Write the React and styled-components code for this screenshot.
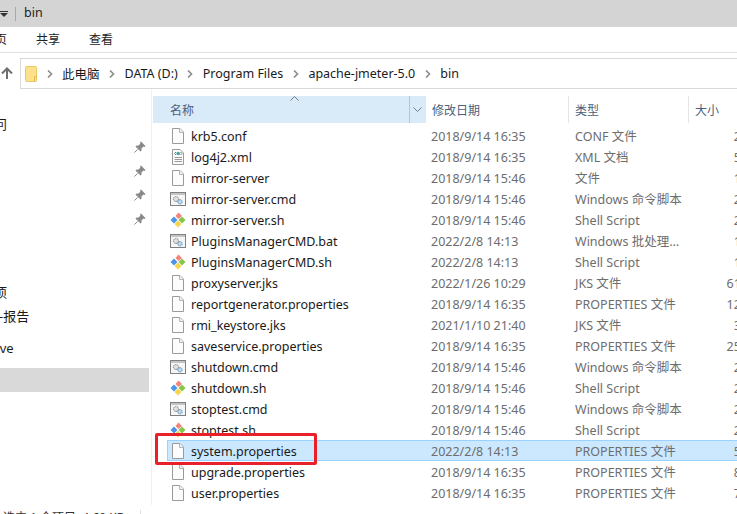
import React from 'react'
import styled, { createGlobalStyle } from 'styled-components'

const Global = createGlobalStyle`
  html, body { margin: 0; padding: 0; background: #fff; }
  body { font-family: "Noto Sans", "Noto Sans CJK SC", sans-serif; font-size: 13px; }
`

const files = [
  { name: 'krb5.conf', date: '2018/9/14 16:35', type: 'CONF 文件', size: '2 KB', icon: 'file' },
  { name: 'log4j2.xml', date: '2018/9/14 16:35', type: 'XML 文档', size: '5 KB', icon: 'xml' },
  { name: 'mirror-server', date: '2018/9/14 15:46', type: '文件', size: '1 KB', icon: 'file' },
  { name: 'mirror-server.cmd', date: '2018/9/14 15:46', type: 'Windows 命令脚本', size: '2 KB', icon: 'cmd' },
  { name: 'mirror-server.sh', date: '2018/9/14 15:46', type: 'Shell Script', size: '2 KB', icon: 'git' },
  { name: 'PluginsManagerCMD.bat', date: '2022/2/8 14:13', type: 'Windows 批处理...', size: '1 KB', icon: 'cmd' },
  { name: 'PluginsManagerCMD.sh', date: '2022/2/8 14:13', type: 'Shell Script', size: '1 KB', icon: 'git' },
  { name: 'proxyserver.jks', date: '2022/1/26 10:29', type: 'JKS 文件', size: '61 KB', icon: 'file' },
  { name: 'reportgenerator.properties', date: '2018/9/14 16:35', type: 'PROPERTIES 文件', size: '12 KB', icon: 'file' },
  { name: 'rmi_keystore.jks', date: '2021/1/10 21:40', type: 'JKS 文件', size: '3 KB', icon: 'file' },
  { name: 'saveservice.properties', date: '2018/9/14 16:35', type: 'PROPERTIES 文件', size: '25 KB', icon: 'file' },
  { name: 'shutdown.cmd', date: '2018/9/14 15:46', type: 'Windows 命令脚本', size: '2 KB', icon: 'cmd' },
  { name: 'shutdown.sh', date: '2018/9/14 15:46', type: 'Shell Script', size: '2 KB', icon: 'git' },
  { name: 'stoptest.cmd', date: '2018/9/14 15:46', type: 'Windows 命令脚本', size: '2 KB', icon: 'cmd' },
  { name: 'stoptest.sh', date: '2018/9/14 15:46', type: 'Shell Script', size: '2 KB', icon: 'git' },
  { name: 'system.properties', date: '2022/2/8 14:13', type: 'PROPERTIES 文件', size: '5 KB', icon: 'file', selected: true },
  { name: 'upgrade.properties', date: '2018/9/14 16:35', type: 'PROPERTIES 文件', size: '8 KB', icon: 'file' },
  { name: 'user.properties', date: '2018/9/14 16:35', type: 'PROPERTIES 文件', size: '7 KB', icon: 'file' },
]

const crumbs = ['此电脑', 'DATA (D:)', 'Program Files', 'apache-jmeter-5.0', 'bin']

const FileIcon = () => (
  <svg width="14" height="16" viewBox="0 0 14 16">
    <path d="M1.500 .5H9L12.500 4V15.500H1.500Z" fill="#fcfcfc" stroke="#9a9a9a" />
    <path d="M8.500 .5V4.500H12.500" fill="#f0f0f0" stroke="#b5b5b5" />
  </svg>
)

const XmlIcon = () => (
  <svg width="14" height="16" viewBox="0 0 14 16">
    <path d="M1.500 .5H9L12.500 4V15.500H1.500Z" fill="#fbfbfb" stroke="#9a9a9a" />
    <path d="M5 3 3.500 4.500 5 6M9.500 3 11 4.500 9.500 6" fill="none" stroke="#777" />
    <circle cx="7.200" cy="4.500" r="1.800" fill="#2f9fc9" />
    <circle cx="7.200" cy="3.800" r=".9" fill="#5cb85c" />
    <path d="M3.500 8.500H11M3.500 10.500H11M3.500 12.500H11" stroke="#9a9a9a" />
  </svg>
)

const CmdIcon = () => (
  <svg width="16" height="14" viewBox="0 0 16 14">
    <rect x=".5" y=".5" width="15" height="13" fill="#f6f6f6" stroke="#808080" />
    <rect x="1" y="1" width="14" height="2" fill="#c4c4c4" />
    <circle cx="6" cy="7" r="2.500" fill="#e2e2e2" stroke="#808080" strokeDasharray="1.500 .6" />
    <circle cx="10" cy="9.800" r="2.200" fill="#bcd9ef" stroke="#5f93bd" strokeDasharray="1.500 .6" />
  </svg>
)

const GitIcon = () => (
  <svg width="16" height="16" viewBox="0 0 16 16">
    <path d="M8.500 .5 12 4 8.500 7 5.500 4Z" fill="#f4837a" />
    <path d="M4 4.500 7.500 8 4 11.500 .5 8Z" fill="#4a94ea" />
    <path d="M12 4.500 15.500 8 12 11.500 8.500 8Z" fill="#84c64c" />
    <path d="M8 8.500 11.500 12 8 15.500 4.500 12Z" fill="#f7d64a" />
  </svg>
)

const icons = { file: FileIcon, xml: XmlIcon, cmd: CmdIcon, git: GitIcon }

const PinIcon = () => (
  <svg width="12" height="12" viewBox="0 0 12 12">
    <path d="M7 .5 11.500 5 10.500 6 9.500 5.500 7.500 7.500 7.500 9.500 6.500 10.500 1.500 5.500 2.500 4.500 4.500 4.500 6.500 2.500 6 1.500Z" fill="#8a8a8a" />
    <path d="M3.500 8.500 .5 11.500" stroke="#8a8a8a" />
  </svg>
)

const FolderIcon = () => (
  <svg width="12" height="16" viewBox="0 0 12 16">
    <rect x=".5" y=".5" width="11" height="15" rx="1" fill="#fde28b" stroke="#e8c766" />
    <path d="M9.500 15.500V10.500H11.500" fill="none" stroke="#e3b94d" />
  </svg>
)

const UpArrow = () => (
  <svg width="12" height="13" viewBox="0 0 12 13">
    <path d="M6 12V1.500M1 6.500 6 1.500 11 6.500" fill="none" stroke="#6f6f6f" strokeWidth="2" />
  </svg>
)

const Chevron = () => (
  <svg width="6" height="8" viewBox="0 0 6 8">
    <path d="M1 .5 4.500 4 1 7.500" fill="none" stroke="#8c8c8c" strokeWidth="1.600" />
  </svg>
)

const SmallCaret = () => (
  <svg width="9" height="5" viewBox="0 0 9 5">
    <path d="M.5 .5 4.500 4.500 8.500 .5" fill="none" stroke="#6e7f92" />
  </svg>
)

const SortCaret = () => (
  <svg width="9" height="5" viewBox="0 0 9 5">
    <path d="M.5 4.500 4.500 .5 8.500 4.500" fill="none" stroke="#7a7a7a" />
  </svg>
)

export default function App() {
  return (
    <Page>
      <Global />
      <TitleBar>
        <QuickCaret />
        <TitleSep />
        <TitleText>bin</TitleText>
      </TitleBar>
      <Ribbon>
        <Tab $clip>主页</Tab>
        <Tab>共享</Tab>
        <Tab>查看</Tab>
      </Ribbon>
      <NavRow>
        <UpButton><UpArrow /></UpButton>
        <AddressBar>
          <FolderIcon />
          {crumbs.map((c) => (
            <React.Fragment key={c}>
              <Chevron />
              <Crumb>{c}</Crumb>
            </React.Fragment>
          ))}
        </AddressBar>
      </NavRow>
      <Body>
        <Sidebar>
          <NavItem><NavLabel $shift={-45}>快速访问</NavLabel></NavItem>
          {[0, 1, 2, 3].map((i) => (
            <NavItem key={i}><PinSlot><PinIcon /></PinSlot></NavItem>
          ))}
          <NavItem />
          <NavItem />
          <NavItem><NavLabel $shift={-19}>事项</NavLabel></NavItem>
          <NavItem><NavLabel $shift={-27}>测试-报告</NavLabel></NavItem>
          <NavItem $gap={9}><NavLabel $shift={-44}>OneDrive</NavLabel></NavItem>
          <NavItem $active $gap={8} />
        </Sidebar>
        <List>
          <HeaderRow>
            <NameHead>
              名称
              <SortMark><SortCaret /></SortMark>
              <HeadDrop><SmallCaret /></HeadDrop>
            </NameHead>
            <HeadCell>修改日期</HeadCell>
            <HeadCell>类型</HeadCell>
            <HeadCell>大小</HeadCell>
          </HeaderRow>
          <Rows>
            {files.map((f) => {
              const Icon = icons[f.icon]
              return (
                <Row key={f.name} $selected={f.selected}>
                  <NameCell>
                    <IconSlot><Icon /></IconSlot>
                    {f.name}
                  </NameCell>
                  <DateCell>{f.date}</DateCell>
                  <TypeCell>{f.type}</TypeCell>
                  <SizeCell>{f.size}</SizeCell>
                </Row>
              )
            })}
          </Rows>
        </List>
      </Body>
      <Status>
        <StatusText>选中 1 个项目  4.60 KB</StatusText>
        <StatusTick />
      </Status>
      <Highlight />
    </Page>
  )
}

const Page = styled.div`
  position: relative;
  width: 737px;
  height: 514px;
  overflow: hidden;
  display: flex;
  flex-direction: column;
  background: #fff;
  color: #1a1a1a;
`
const TitleBar = styled.div`
  height: 27px;
  flex: none;
  background: #d4d4d4;
  display: flex;
  align-items: center;
`
const QuickCaret = styled.div`
  position: relative;
  width: 0;
  height: 0;
  margin: 2px 0 0 0;
  border-left: 4px solid transparent;
  border-right: 4px solid transparent;
  border-top: 4px solid #333;
  &::before {
    content: '';
    position: absolute;
    left: -4px;
    top: -6px;
    width: 8px;
    height: 1px;
    background: #333;
  }
`
const TitleSep = styled.div`
  width: 1px;
  height: 14px;
  margin-left: 7px;
  background: #a8a8a8;
`
const TitleText = styled.div`
  margin: 0 0 3px 8px;
  font-size: 12.500px;
  color: #222;
`
const Ribbon = styled.div`
  height: 26px;
  flex: none;
  border-bottom: 1px solid #e0e0e0;
  display: flex;
  align-items: center;
  gap: 29px;
  padding-bottom: 1px;
  box-sizing: border-box;
`
const Tab = styled.div`
  font-size: 12px;
  color: #222;
  margin-left: ${(p) => (p.$clip ? '-17px' : '0')};
`
const NavRow = styled.div`
  height: 31px;
  flex: none;
  margin-top: 5px;
  display: flex;
  align-items: center;
`
const UpButton = styled.div`
  width: 20px;
  flex: none;
  display: flex;
  justify-content: center;
  padding-right: 6px;
  box-sizing: border-box;
`
const AddressBar = styled.div`
  flex: 1;
  height: 31px;
  box-sizing: border-box;
  border: 1px solid #d9d9d9;
  border-right: 0;
  display: flex;
  align-items: center;
  padding-left: 4px;
  gap: 9.500px;
`
const Crumb = styled.span`
  font-size: 12.500px;
  color: #1a1a1a;
  white-space: nowrap;
`
const Body = styled.div`
  flex: 1;
  min-height: 0;
  display: flex;
`
const Sidebar = styled.div`
  width: 152px;
  flex: none;
  box-sizing: border-box;
  padding-top: 22px;
  border-right: 1px solid #f0f0f0;
  overflow: hidden;
`
const NavItem = styled.div`
  height: 24px;
  width: 149px;
  display: flex;
  align-items: center;
  white-space: nowrap;
  margin-top: ${(p) => p.$gap || 0}px;
  background: ${(p) => (p.$active ? '#d9d9d9' : 'transparent')};
`
const NavLabel = styled.span`
  font-size: 13px;
  color: #1a1a1a;
  margin-left: ${(p) => p.$shift}px;
`
const PinSlot = styled.span`
  margin-left: 134px;
  display: flex;
`
const List = styled.div`
  flex: 1;
  min-width: 0;
  padding: 7px 0 0 1px;
`
const HeaderRow = styled.div`
  height: 27px;
  display: grid;
  grid-template-columns: 272px 143px 120px 1fr;
`
const HeadCell = styled.div`
  display: flex;
  align-items: center;
  padding-left: 6px;
  font-size: 12px;
  color: #4c607a;
  & + & { border-left: 1px solid #e5e5e5; }
`
const NameHead = styled(HeadCell)`
  position: relative;
  padding-left: 17px;
  background: #d9ebf9;
`
const SortMark = styled.span`
  position: absolute;
  left: 137px;
  top: 0;
  display: flex;
`
const HeadDrop = styled.span`
  position: absolute;
  right: 0;
  top: 0;
  bottom: 0;
  width: 15px;
  border-left: 1px solid #a9c8e0;
  display: flex;
  align-items: center;
  justify-content: center;
`
const Rows = styled.div`
  padding: 2px 0 0 14px;
`
const Row = styled.div`
  width: 593px;
  height: 21px;
  display: grid;
  grid-template-columns: 258px 143px 120px 72px;
  align-items: center;
  box-sizing: border-box;
  line-height: 17px;
  padding-top: 1px;
  white-space: nowrap;
  background: ${(p) => (p.$selected ? '#cce8ff' : 'transparent')};
  box-shadow: ${(p) => (p.$selected ? 'inset 0 0 0 1px #99d1ff' : 'none')};
`
const NameCell = styled.div`
  display: flex;
  align-items: center;
  font-size: 12.500px;
  color: #1a1a1a;
`
const IconSlot = styled.span`
  width: 24px;
  flex: none;
  display: flex;
  justify-content: center;
  padding-right: 3px;
  box-sizing: border-box;
`
const DateCell = styled.div`
  padding-left: 6px;
  font-size: 12.500px;
  color: #6d6d6d;
`
const TypeCell = styled(DateCell)`
  padding-left: 7px;
`
const SizeCell = styled(DateCell)`
  padding: 0;
  text-align: right;
`
const Status = styled.div`
  height: 9px;
  flex: none;
  display: flex;
  position: relative;
`
const StatusText = styled.div`
  margin: 3px 0 0 3px;
  font-size: 12px;
  white-space: pre;
  color: #333;
`
const StatusTick = styled.div`
  position: absolute;
  left: 140px;
  top: 5px;
  width: 1px;
  height: 4px;
  background: #e0e0e0;
`
const Highlight = styled.div`
  position: absolute;
  left: 155px;
  top: 433px;
  width: 162px;
  height: 32px;
  box-sizing: border-box;
  border: 3px solid #e8202a;
  border-radius: 2px;
`
